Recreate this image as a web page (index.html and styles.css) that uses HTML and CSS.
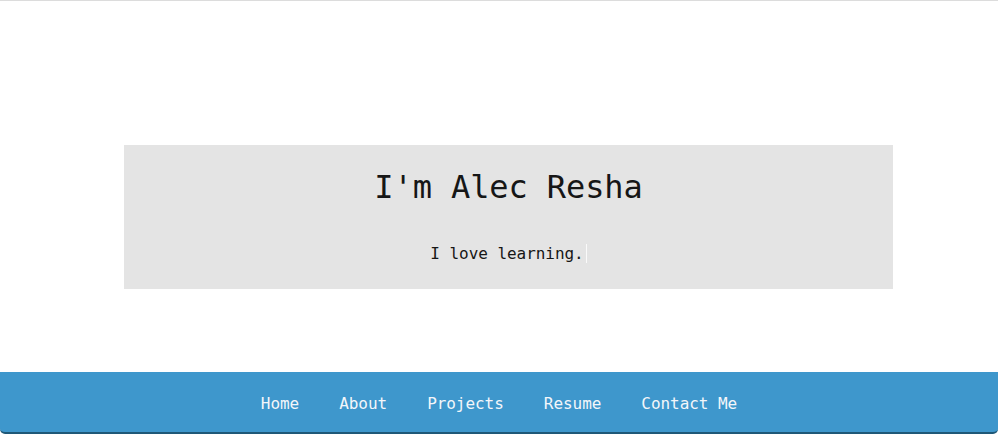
FILE: index.html
```html
<!DOCTYPE html>
<html lang="en">
<head>
<meta charset="utf-8">
<title>Alec Resha</title>
<link rel="stylesheet" href="styles.css">
</head>
<body>
<div class="topline"></div>
<main class="hero">
  <section class="intro">
    <h1 class="intro-title">I'm Alec Resha</h1>
    <p class="intro-sub">I love learning.<span class="cursor"></span></p>
  </section>
</main>
<nav class="navbar">
  <a class="nav-link" href="#">Home</a>
  <a class="nav-link" href="#">About</a>
  <a class="nav-link" href="#">Projects</a>
  <a class="nav-link" href="#">Resume</a>
  <a class="nav-link" href="#">Contact Me</a>
</nav>
</body>
</html>
```
FILE: styles.css
```css
html, body {
  margin: 0;
  padding: 0;
  background: #ffffff;
}
body {
  font-family: "DejaVu Sans Mono", "Liberation Mono", monospace;
  color: #111;
}
.topline {
  height: 1px;
  background: #dcdcdc;
}
.hero {
  height: 371px;
  box-sizing: border-box;
  padding-top: 144px;
}
.intro {
  margin: 0 105px 0 124px;
  height: 144px;
  box-sizing: border-box;
  background: #e4e4e4;
  text-align: center;
  padding-top: 24px;
}
.intro-title {
  margin: 0;
  font-size: 32px;
  font-weight: normal;
  line-height: 37px;
  letter-spacing: -0.1px;
  color: #161616;
}
.intro-sub {
  margin: 38px 0 0;
  font-size: 16px;
  line-height: 19px;
  letter-spacing: -0.05px;
  color: #161616;
}
.cursor {
  display: inline-block;
  width: 1px;
  height: 19px;
  margin-left: 2px;
  vertical-align: top;
  background: #fafafa;
}
.navbar {
  height: 62px;
  box-sizing: border-box;
  background: #3e97cc;
  border-bottom: 2px solid #1f5877;
  border-radius: 0 0 5px 5px;
  display: flex;
  justify-content: center;
  align-items: flex-start;
  padding-top: 22px;
}
.nav-link {
  font-size: 16px;
  line-height: 19px;
  letter-spacing: -0.05px;
  color: #f3f6fa;
  text-decoration: none;
  padding: 0 20px;
}
```
